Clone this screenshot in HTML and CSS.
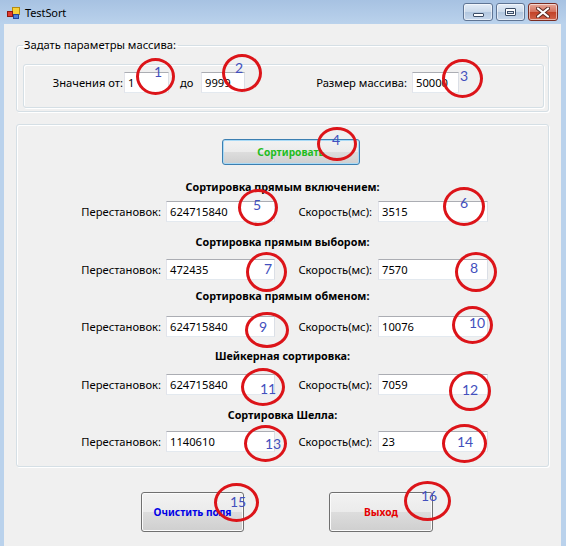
FILE: index.html
```html
<!DOCTYPE html>
<html lang="ru">
<head>
<meta charset="utf-8">
<title>TestSort</title>
<link rel="stylesheet" href="styles.css">
</head>
<body>
<div class="window">
  <div class="titlebar">
    <svg class="app-icon" width="13" height="12" viewBox="0 0 13 12">
      <rect x="5.5" y="0.5" width="7" height="7" fill="#f7d23a" stroke="#b58a10"/>
      <rect x="0.5" y="4.5" width="5" height="5" fill="#e23b2e" stroke="#8e1a12"/>
      <rect x="6.5" y="7.5" width="5" height="4" fill="#4d7fd8" stroke="#22489a"/>
    </svg>
    <span class="title">TestSort</span>
    <div class="caption-buttons">
      <div class="cbtn cbtn-min"><span class="glyph-min"></span></div>
      <div class="cbtn cbtn-max"><span class="glyph-max"></span></div>
      <div class="cbtn cbtn-close">
        <svg width="14" height="11" viewBox="0 0 14 11">
          <path d="M2 1.5 L12 9.5 M12 1.5 L2 9.5" stroke="#5a2a22" stroke-width="4" stroke-linecap="round"/>
          <path d="M2 1.5 L12 9.5 M12 1.5 L2 9.5" stroke="#ffffff" stroke-width="2.2" stroke-linecap="round"/>
        </svg>
      </div>
    </div>
  </div>

  <div class="client">
    <fieldset class="group params">
      <legend>Задать параметры массива:</legend>
      <div class="inner">
        <span class="lbl lbl-from">Значения от:</span>
        <div class="tb tb-from">1</div>
        <span class="lbl lbl-to">до</span>
        <div class="tb tb-to">9999</div>
        <span class="lbl lbl-size">Размер массива:</span>
        <div class="tb tb-size">50000</div>
      </div>
    </fieldset>

    <div class="group results">
      <div class="sort-bar"><button class="btn btn-sort">Сортировать</button></div>

      <section class="sort s1">
        <h3>Сортировка прямым включением:</h3>
        <div class="row">
          <span class="lbl lbl-swaps">Перестановок:</span>
          <div class="tb tb-wide">624715840</div>
          <span class="lbl lbl-speed">Скорость(мс):</span>
          <div class="tb tb-wide2">3515</div>
        </div>
      </section>

      <section class="sort s2">
        <h3>Сортировка прямым выбором:</h3>
        <div class="row">
          <span class="lbl lbl-swaps">Перестановок:</span>
          <div class="tb tb-wide">472435</div>
          <span class="lbl lbl-speed">Скорость(мс):</span>
          <div class="tb tb-wide2">7570</div>
        </div>
      </section>

      <section class="sort s3">
        <h3>Сортировка прямым обменом:</h3>
        <div class="row">
          <span class="lbl lbl-swaps">Перестановок:</span>
          <div class="tb tb-wide">624715840</div>
          <span class="lbl lbl-speed">Скорость(мс):</span>
          <div class="tb tb-wide2">10076</div>
        </div>
      </section>

      <section class="sort s4">
        <h3>Шейкерная сортировка:</h3>
        <div class="row">
          <span class="lbl lbl-swaps">Перестановок:</span>
          <div class="tb tb-wide">624715840</div>
          <span class="lbl lbl-speed">Скорость(мс):</span>
          <div class="tb tb-wide2">7059</div>
        </div>
      </section>

      <section class="sort s5">
        <h3>Сортировка Шелла:</h3>
        <div class="row">
          <span class="lbl lbl-swaps">Перестановок:</span>
          <div class="tb tb-wide">1140610</div>
          <span class="lbl lbl-speed">Скорость(мс):</span>
          <div class="tb tb-wide2">23</div>
        </div>
      </section>
    </div>

    <div class="actions">
      <button class="btn btn-clear">Очистить поля</button>
      <button class="btn btn-exit">Выход</button>
    </div>
  </div>

  <div class="annotations">
    <span class="ring c1"></span><span class="num n1">1</span>
    <span class="ring c2"></span><span class="num n2">2</span>
    <span class="ring c3"></span><span class="num n3">3</span>
    <span class="ring c4"></span><span class="num n4">4</span>
    <span class="ring c5"></span><span class="num n5">5</span>
    <span class="ring c6"></span><span class="num n6">6</span>
    <span class="ring c7"></span><span class="num n7">7</span>
    <span class="ring c8"></span><span class="num n8">8</span>
    <span class="ring c9"></span><span class="num n9">9</span>
    <span class="ring c10"></span><span class="num n10">10</span>
    <span class="ring c11"></span><span class="num n11">11</span>
    <span class="ring c12"></span><span class="num n12">12</span>
    <span class="ring c13"></span><span class="num n13">13</span>
    <span class="ring c14"></span><span class="num n14">14</span>
    <span class="ring c15"></span><span class="num n15">15</span>
    <span class="ring c16"></span><span class="num n16">16</span>
  </div>
</div>
</body>
</html>
```

FILE: styles.css
```css
* { box-sizing: border-box; }
html, body { margin: 0; padding: 0; }
body {
  width: 566px;
  height: 546px;
  overflow: hidden;
  font-family: "Noto Sans", "DejaVu Sans", sans-serif;
  font-size: 11.2px;
  color: #000;
}

.window {
  position: relative;
  width: 566px;
  height: 546px;
  background: #bad2ec;
  display: flex;
  flex-direction: column;
}

/* ---------- title bar ---------- */
.titlebar {
  height: 24px;
  flex: none;
  display: flex;
  align-items: center;
  padding-left: 7px;
  background: linear-gradient(#a7c2e2, #bad2ec);
}
.app-icon { margin-right: 5px; margin-top: 1px; }
.title { font-size: 11px; line-height: 14px; margin-top: 1px; letter-spacing: -0.1px; }

.caption-buttons {
  margin-left: auto;
  margin-right: 8px;
  align-self: flex-start;
  margin-top: 3px;
  display: flex;
  gap: 3px;
}
.cbtn {
  width: 30px;
  height: 18px;
  border: 1px solid #5f7594;
  border-radius: 3px;
  display: flex;
  align-items: center;
  justify-content: center;
  background: linear-gradient(#e4edf7, #cbdaeb 48%, #b2c7df 52%, #c7d8ec);
  box-shadow: inset 0 0 0 1px rgba(255,255,255,0.55);
}
.cbtn-max { width: 29px; }
.cbtn-close {
  border-color: #7a2c22;
  background: linear-gradient(#e7a899, #d4725e 48%, #c24227 52%, #d1644b);
}
.glyph-min {
  width: 11px;
  height: 4px;
  margin-top: 5px;
  background: #fff;
  border: 1px solid #3b4d66;
  border-radius: 1px;
}
.glyph-max {
  width: 11px;
  height: 8px;
  border: 1px solid #3b4d66;
  border-radius: 1px;
  background: #fff;
  position: relative;
}
.glyph-max::after {
  content: "";
  position: absolute;
  left: 1px; right: 1px; top: 2px; bottom: 1px;
  border: 1px solid #3b4d66;
  background: #d8e3f0;
}

/* ---------- client area ---------- */
.client {
  flex: 1;
  margin: 0 5px 0 4px;
  background: #f0f0f0;
  padding: 14px 12px 0 12px;
}

.group {
  border: 1px solid #d5dfe5;
  border-radius: 3px;
  box-shadow: inset 1px 1px 0 #fff, 1px 1px 0 #fff;
}

fieldset.params {
  margin: 0;
  padding: 0 4px 3px 6px;
  min-width: 0;
}
fieldset.params legend {
  padding: 0 2px 0 1px;
  line-height: 14px;
  font-size: 11.2px;
}

.inner {
  margin-top: 12px;
  height: 44px;
  border: 1px solid #d5dfe5;
  border-radius: 3px;
  box-shadow: inset 1px 1px 0 #fff, 1px 1px 0 #fff;
  display: flex;
  align-items: flex-start;
  padding: 7px 0 0 24px;
}

.lbl {
  line-height: 21px;
  height: 21px;
  white-space: nowrap;
  flex: none;
}
.lbl-from { width: 75px; text-align: right; }
.lbl-to { width: 16px; margin-left: 11px; }
.lbl-size { width: 92px; margin-left: 70px; text-align: right; }

.tb {
  flex: none;
  height: 21px;
  background: #fff;
  border: 1px solid;
  border-color: #abadb3 #dbdfe6 #e3e9ef #e2e3ea;
  padding: 0 3px;
  line-height: 19px;
  white-space: nowrap;
  overflow: hidden;
}
.tb-from { width: 45px; margin-left: 1px; }
.tb-to { width: 44px; margin-left: 5px; }
.tb-size { width: 47px; margin-left: 5px; }

/* ---------- results group ---------- */
.results {
  margin-top: 12px;
  padding: 0 0 14px 0;
}
.sort-bar {
  display: flex;
  padding: 14px 0 0 205px;
}

.btn {
  font-family: "Noto Sans", "DejaVu Sans", sans-serif;
  font-size: 10.2px;
  font-weight: bold;
  border: 1px solid #707070;
  border-radius: 3px;
  background: linear-gradient(#f2f2f2, #ebebeb 50%, #dddddd 50%, #cfcfcf);
  box-shadow: inset 0 0 0 1px #fbfbfb;
  padding: 0;
  cursor: default;
}
.btn-sort {
  width: 138px;
  height: 26px;
  color: #1fbd1f;
  border-color: #3c7fb1;
  box-shadow: inset 0 0 0 1px #a9daf6;
}

.sort h3 {
  margin: 0;
  font-size: 10.8px;
  font-weight: bold;
  line-height: 14px;
  text-align: center;
}
.s1 h3 { margin-top: 15px; }
.s2 h3 { margin-top: 13px; }
.s3 h3 { margin-top: 9px; }
.s4 h3 { margin-top: 12px; }
.s5 h3 { margin-top: 13px; }
.s1 .row { margin-top: 7px; }
.s2 .row { margin-top: 10px; }
.s3 .row { margin-top: 13px; }
.s4 .row { margin-top: 11px; }
.s5 .row { margin-top: 9px; }

.row {
  display: flex;
  align-items: flex-start;
}
.lbl-swaps { width: 144px; text-align: right; }
.tb-wide { width: 109px; margin-left: 5px; }
.lbl-speed { width: 97px; text-align: right; }
.tb-wide2 { width: 110px; margin-left: 6px; }

/* ---------- bottom buttons ---------- */
.actions {
  display: flex;
  gap: 85px;
  padding: 25px 0 0 125px;
}
.btn-clear { width: 103px; height: 40px; color: #0000e6; }
.btn-exit { width: 104px; height: 40px; color: #e60000; }

/* ---------- annotation overlay ---------- */
.annotations {
  position: absolute;
  inset: 0;
  pointer-events: none;
}
.ring {
  position: absolute;
  border: 3px solid #dc1419;
  border-radius: 50%;
}
.num {
  position: absolute;
  font-family: "Lato", "Open Sans", sans-serif;
  font-size: 14px;
  line-height: 14px;
  color: #4350bd;
}

.c1 { left: 136px; top: 58px; width: 39px; height: 37px; }
.c2 { left: 222px; top: 54px; width: 40px; height: 38px; }
.c3 { left: 442px; top: 59px; width: 41px; height: 39px; }
.c4 { left: 317px; top: 127px; width: 40px; height: 34px; }
.c5 { left: 238px; top: 189px; width: 40px; height: 37px; }
.c6 { left: 443px; top: 187px; width: 42px; height: 39px; }
.c7 { left: 246px; top: 252px; width: 41px; height: 40px; }
.c8 { left: 455px; top: 252px; width: 42px; height: 40px; }
.c9 { left: 245px; top: 312px; width: 44px; height: 36px; }
.c10 { left: 452px; top: 306px; width: 41px; height: 38px; }
.c11 { left: 241px; top: 368px; width: 44px; height: 38px; }
.c12 { left: 449px; top: 371px; width: 42px; height: 40px; }
.c13 { left: 244px; top: 425px; width: 43px; height: 37px; }
.c14 { left: 442px; top: 424px; width: 45px; height: 39px; }
.c15 { left: 214px; top: 483px; width: 45px; height: 39px; }
.c16 { left: 404px; top: 481px; width: 47px; height: 40px; }

.n1 { left: 154px; top: 65px; }
.n2 { left: 235px; top: 61px; }
.n3 { left: 460px; top: 69px; }
.n4 { left: 332px; top: 133px; }
.n5 { left: 253px; top: 198px; }
.n6 { left: 460px; top: 196px; }
.n7 { left: 264px; top: 262px; }
.n8 { left: 470px; top: 261px; }
.n9 { left: 259px; top: 320px; }
.n10 { left: 469px; top: 316px; }
.n11 { left: 260px; top: 382px; }
.n12 { left: 462px; top: 383px; }
.n13 { left: 265px; top: 437px; }
.n14 { left: 457px; top: 435px; }
.n15 { left: 230px; top: 495px; }
.n16 { left: 421px; top: 489px; }
```
